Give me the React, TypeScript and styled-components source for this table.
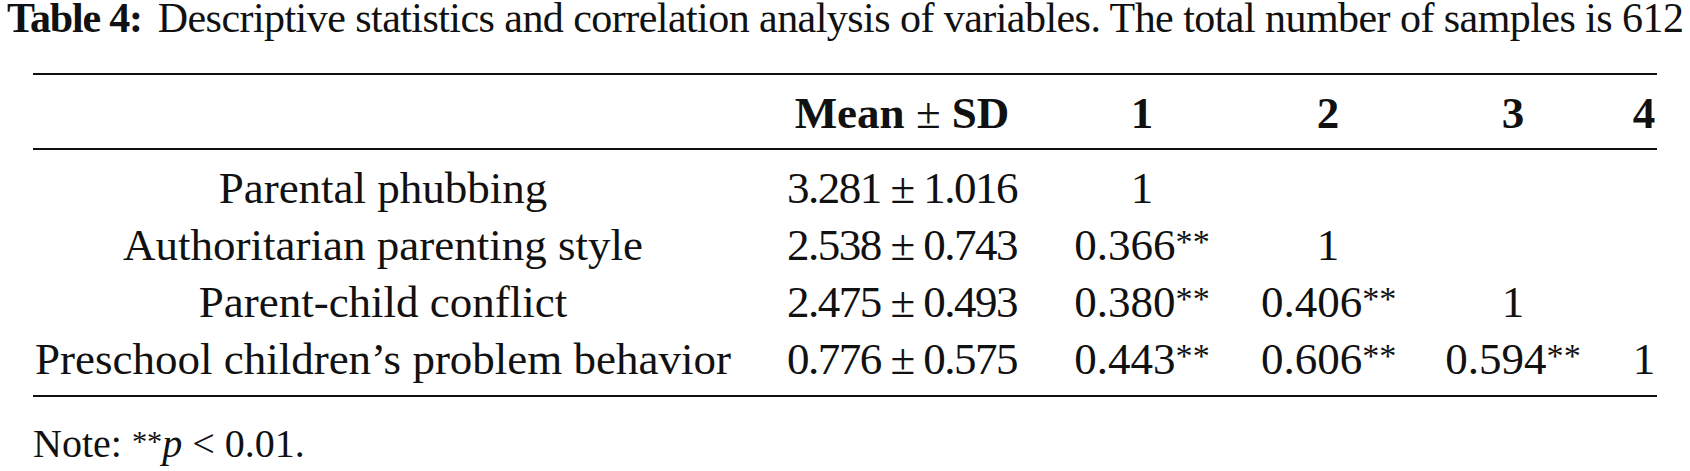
import React from "react";
import styled, { createGlobalStyle } from "styled-components";

const GlobalStyle = createGlobalStyle`
  html, body {
    margin: 0;
    padding: 0;
    background: #ffffff;
  }
  body {
    font-family: "Liberation Serif", "Times New Roman", serif;
    color: #111111;
  }
`;

// Column widths and gap, measured from the reference
const columns = "700px 242px 142px 134px 140px 26px";

const Page = styled.div`
  width: 1690px;
  display: flex;
  flex-direction: column;
`;

const Caption = styled.div`
  font-size: 42px;
  line-height: 36px;
  height: 36px;
  padding-left: 7px;
  letter-spacing: -0.55px;
  white-space: nowrap;
`;

const CaptionLabel = styled.span`
  font-weight: bold;
  letter-spacing: -1.2px;
  margin-right: 16px;
`;

const Table = styled.div`
  margin: 37px 0 0 33px;
  width: 1624px;
  border-top: 2px solid #111111;
  border-bottom: 2px solid #111111;
  font-size: 45px;
`;

const Head = styled.div`
  padding: 10px 0 7px;
  border-bottom: 2px solid #111111;
`;

const Body = styled.div`
  padding: 10px 0 7px;
`;

const Row = styled.div<{ $bold?: boolean }>`
  display: grid;
  grid-template-columns: ${columns};
  column-gap: 48px;
  height: 57px;
  line-height: 57px;
  font-weight: ${(p) => (p.$bold ? "bold" : "normal")};
`;

const HeadRow = styled(Row)`
  height: 56px;
  line-height: 56px;
`;

const Cell = styled.div`
  text-align: center;
  white-space: nowrap;
`;

// Mean ± SD values are set a bit tighter in the reference
const MeanCell = styled(Cell)`
  letter-spacing: -1.5px;
`;

const Light = styled.span`
  font-weight: normal;
`;

const Stars = styled.span`
  font-size: 0.76em;
  vertical-align: 0.2em;
  line-height: 0;
  letter-spacing: 0;
`;

const Note = styled.div`
  margin: 25px 0 0 33px;
  font-size: 40px;
  line-height: 44px;
`;

const Italic = styled.span`
  font-style: italic;
`;

type Value = string | { r: string };

const rows: { label: string; mean: string; values: Value[] }[] = [
  { label: "Parental phubbing", mean: "3.281 ± 1.016", values: ["1", "", "", ""] },
  {
    label: "Authoritarian parenting style",
    mean: "2.538 ± 0.743",
    values: [{ r: "0.366" }, "1", "", ""],
  },
  {
    label: "Parent-child conflict",
    mean: "2.475 ± 0.493",
    values: [{ r: "0.380" }, { r: "0.406" }, "1", ""],
  },
  {
    label: "Preschool children’s problem behavior",
    mean: "0.776 ± 0.575",
    values: [{ r: "0.443" }, { r: "0.606" }, { r: "0.594" }, "1"],
  },
];

const renderValue = (v: Value) =>
  typeof v === "string" ? (
    v
  ) : (
    <>
      {v.r}
      <Stars>**</Stars>
    </>
  );

export default function App() {
  return (
    <Page>
      <GlobalStyle />
      <Caption>
        <CaptionLabel>Table 4:</CaptionLabel>
        Descriptive statistics and correlation analysis of variables. The total
        number of samples is 612
      </Caption>
      <Table>
        <Head>
          <HeadRow $bold>
            <Cell />
            <Cell>
              Mean <Light>±</Light> SD
            </Cell>
            <Cell>1</Cell>
            <Cell>2</Cell>
            <Cell>3</Cell>
            <Cell>4</Cell>
          </HeadRow>
        </Head>
        <Body>
          {rows.map((row) => (
            <Row key={row.label}>
              <Cell>{row.label}</Cell>
              <MeanCell>{row.mean}</MeanCell>
              {row.values.map((v, i) => (
                <Cell key={i}>{renderValue(v)}</Cell>
              ))}
            </Row>
          ))}
        </Body>
      </Table>
      <Note>
        Note: <Stars>**</Stars>
        <Italic>p</Italic> &lt; 0.01.
      </Note>
    </Page>
  );
}
